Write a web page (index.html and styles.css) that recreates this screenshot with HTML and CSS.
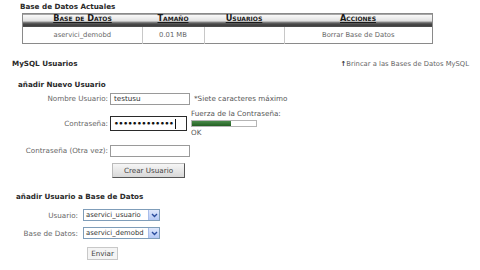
FILE: index.html
```html
<!DOCTYPE html>
<html lang="es">
<head>
<meta charset="utf-8">
<title>MySQL Bases de Datos</title>
<link rel="stylesheet" href="styles.css">
</head>
<body>
<div class="page">
  <div class="db-title">Base de Datos Actuales</div>
  <table class="dbtable">
    <thead>
      <tr>
        <th class="c1"><span>Base de Datos</span></th>
        <th class="c2"><span>Tamaño</span></th>
        <th class="c3"><span>Usuarios</span></th>
        <th class="c4"><span>Acciones</span></th>
      </tr>
    </thead>
    <tbody>
      <tr>
        <td>aservici_demobd</td>
        <td>0.01 MB</td>
        <td></td>
        <td>Borrar Base de Datos</td>
      </tr>
    </tbody>
  </table>

  <div class="users-head">
    <div class="users-title">MySQL Usuarios</div>
    <div class="jump"><span class="arrow">↑</span>Brincar a las Bases de Datos MySQL</div>
  </div>

  <div class="sub">añadir Nuevo Usuario</div>

  <div class="frow r1">
    <div class="lbl">Nombre Usuario:</div>
    <div class="input">testusu</div>
    <div class="note">*Siete caracteres máximo</div>
  </div>
  <div class="frow r2">
    <div class="lbl lbl-pw">Contraseña:</div>
    <div class="input pw">•••••••••••••<span class="caret"></span></div>
    <div class="strength">
      <div class="st-label">Fuerza de la Contraseña:</div>
      <div class="bar"><div class="fill" style="width:61%"></div></div>
      <div class="st-ok">OK</div>
    </div>
  </div>
  <div class="frow r3">
    <div class="lbl">Contraseña (Otra vez):</div>
    <div class="input small"></div>
  </div>
  <div class="frow r4">
    <div class="lbl"></div>
    <div class="btn create">Crear Usuario</div>
  </div>

  <div class="sub sub2">añadir Usuario a Base de Datos</div>

  <div class="srow s1">
    <div class="slbl">Usuario:</div>
    <div class="select"><span class="sval">aservici_usuario</span><span class="sarrow"><svg width="7" height="5" viewBox="0 0 7 5"><path d="M1 1 L3.5 3.5 L6 1" fill="none" stroke="#2a4c9c" stroke-width="1.4"/></svg></span></div>
  </div>
  <div class="srow s2">
    <div class="slbl">Base de Datos:</div>
    <div class="select"><span class="sval">aservici_demobd</span><span class="sarrow"><svg width="7" height="5" viewBox="0 0 7 5"><path d="M1 1 L3.5 3.5 L6 1" fill="none" stroke="#2a4c9c" stroke-width="1.4"/></svg></span></div>
  </div>
  <div class="srow s3">
    <div class="slbl"></div>
    <div class="btn send">Enviar</div>
  </div>
</div>
</body>
</html>
```
FILE: styles.css
```css
html, body {
  margin: 0;
  padding: 0;
  background: #ffffff;
}
body {
  font-family: "DejaVu Sans", Verdana, sans-serif;
  font-size: 7.2px;
  color: #555;
  width: 480px;
  height: 270px;
  overflow: hidden;
}
.page {
  padding-top: 2px;
}
.db-title {
  padding-left: 20px;
  height: 11px;
  line-height: 10px;
  font-weight: bold;
  color: #2a2a2a;
  font-size: 7.2px;
}
.dbtable {
  margin-left: 22px;
  width: 411px;
  border-collapse: collapse;
  border: 1px solid #8a8a8a;
  table-layout: fixed;
}
.dbtable th {
  height: 13px;
  padding: 0;
  background: linear-gradient(to bottom, #fbfbfb 0%, #e0e0e0 50%, #6a6a6a 62%, #3a3a3a 82%, #5a5a5a 100%);
  font-weight: bold;
  font-variant: small-caps;
  font-size: 8.2px;
  color: #1a1a1a;
  text-align: center;
  vertical-align: top;
  line-height: 9px;
}
.dbtable th span {
  text-decoration: underline;
}
.dbtable th.c1 { width: 119px; }
.dbtable th.c2 { width: 62px; }
.dbtable th.c3 { width: 80px; }
.dbtable td {
  height: 16px;
  padding: 0;
  text-align: center;
  border-left: 1px solid #c8c8c8;
  color: #666;
  font-size: 6.8px;
}
.dbtable td:first-child { border-left: none; }

.users-head {
  margin-top: 15px;
  display: flex;
  justify-content: space-between;
  padding-left: 12px;
  padding-right: 11px;
  line-height: 10px;
  height: 10px;
}
.users-title {
  font-weight: bold;
  color: #2a2a2a;
}
.jump {
  color: #666;
  font-size: 6.8px;
}
.arrow {
  font-weight: bold;
  color: #333;
}
.sub {
  margin-top: 11px;
  padding-left: 18px;
  font-weight: bold;
  color: #2a2a2a;
  line-height: 10px;
  height: 10px;
}
.sub2 {
  margin-top: 14px;
  padding-left: 16px;
}
.frow {
  display: flex;
  align-items: flex-start;
}
.lbl {
  width: 108px;
  text-align: right;
  color: #666;
  line-height: 12px;
}
.input {
  margin-left: 2px;
  width: 75px;
  height: 10px;
  border: 1px solid #9a9a9a;
  background: #fff;
  color: #333;
  padding-left: 3px;
  line-height: 10px;
  box-sizing: content-box;
}
.note {
  margin-left: 4px;
  color: #555;
  line-height: 12px;
}
.r1 { margin-top: 3px; height: 12px; }
.r2 { margin-top: 4px; height: 28px; }
.lbl-pw { margin-top: 9px; }
.pw {
  margin-top: 7px;
  height: 13px;
  width: 72px;
  border: 1px solid #2a2a2a;
  color: #111;
  font-size: 7.5px;
  font-weight: bold;
  line-height: 13px;
  letter-spacing: -0.2px;
  display: flex;
  align-items: center;
}
.caret {
  display: inline-block;
  width: 1px;
  height: 10px;
  background: #111;
  margin-left: 1px;
}
.strength {
  margin-left: 4px;
  margin-top: 1px;
  color: #555;
}
.st-label { line-height: 8px; }
.bar {
  margin-top: 2px;
  width: 64px;
  height: 5px;
  border: 1px solid #b5b5b5;
  background: #fff;
}
.fill {
  height: 100%;
  background: linear-gradient(to bottom, #4a8a4a, #226022);
}
.st-ok { line-height: 9px; margin-top: 1px; }
.r3 { margin-top: 8px; height: 12px; }
.small { height: 10px; }
.r4 { margin-top: 5px; }
.btn {
  border: 1px solid #555;
  border-top-color: #bbb;
  border-left-color: #bbb;
  background: linear-gradient(to bottom, #f6f6f6, #d8d8d8);
  color: #444;
  text-align: center;
  box-sizing: border-box;
}
.create {
  margin-left: 4px;
  margin-top: 1px;
  width: 73px;
  height: 15px;
  line-height: 13px;
}
.srow {
  display: flex;
  align-items: center;
}
.slbl {
  width: 78px;
  text-align: right;
  color: #666;
}
.select {
  margin-left: 5px;
  width: 77px;
  height: 12px;
  box-sizing: border-box;
  border: 1px solid #7f9db9;
  display: flex;
  align-items: center;
  justify-content: space-between;
  color: #333;
  background: #fff;
}
.sval { padding-left: 2px; font-size: 6.8px; }
.sarrow {
  width: 10px;
  height: 10px;
  background: linear-gradient(to bottom, #dfe8fc, #b4c8f4);
  border-left: 1px solid #a8bdea;
  display: flex;
  align-items: center;
  justify-content: center;
}
.s1 { margin-top: 7px; }
.s2 { margin-top: 6px; }
.s3 { margin-top: 8px; }
.send {
  margin-left: 9px;
  width: 31px;
  height: 13px;
  line-height: 11px;
  border: 1px solid #c8c8c8;
  background: #f4f4f4;
}
```
